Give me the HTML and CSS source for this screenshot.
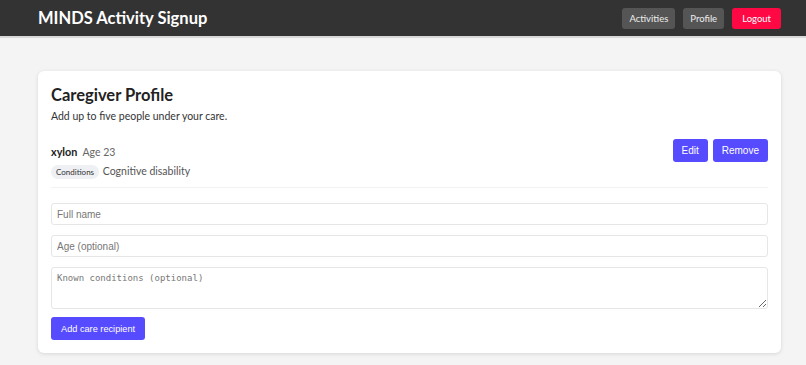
FILE: index.html
```html
<!DOCTYPE html>
<html lang="en">
<head>
  <meta charset="UTF-8">
  <meta name="viewport" content="width=device-width, initial-scale=1.0">
  <title>MINDS Activity Signup</title>
  <link rel="stylesheet" href="styles.css">
</head>
<body>
  <header class="topbar">
    <div class="brand">MINDS Activity Signup</div>
    <nav class="nav">
      <a href="#" class="nav-btn">Activities</a>
      <a href="#" class="nav-btn">Profile</a>
      <a href="#" class="nav-btn logout">Logout</a>
    </nav>
  </header>

  <main>
    <!-- Profil du soignant -->
    <section class="card">
      <h1>Caregiver Profile</h1>
      <p class="lead">Add up to five people under your care.</p>

      <div class="recipient">
        <div class="recipient-info">
          <div><span class="name">xylon</span> <span class="age">Age 23</span></div>
          <div class="cond"><span class="pill">Conditions</span> Cognitive disability</div>
        </div>
        <div class="recipient-actions">
          <button class="btn">Edit</button>
          <button class="btn">Remove</button>
        </div>
      </div>

      <form class="add-form" onsubmit="return false">
        <input type="text" placeholder="Full name">
        <input type="text" placeholder="Age (optional)">
        <textarea placeholder="Known conditions (optional)"></textarea>
        <div class="form-actions"><button class="btn add">Add care recipient</button></div>
      </form>
    </section>
  </main>
</body>
</html>
```

FILE: styles.css
```css
/* Style général */
body {
  font-family: Lato, "Open Sans", sans-serif;
  margin: 0;
  padding: 0;
  background-color: #f4f4f4;
  color: #222;
}

.topbar {
  background-color: #333;
  border-bottom: 2px solid #d8d8d8;
  height: 36px;
  display: flex;
  align-items: center;
  justify-content: space-between;
  padding: 0 25px 0 38px;
}

.brand {
  color: #fff;
  font-weight: 700;
  font-size: 16.5px;
}

.nav {
  display: flex;
  gap: 8px;
}

.nav-btn {
  background-color: #555;
  color: #eee;
  text-decoration: none;
  font-size: 9.5px;
  padding: 0 7px;
  height: 21px;
  line-height: 21px;
  border-radius: 3px;
}

.nav-btn.logout {
  background-color: #ff0844;
  color: #fff;
  padding: 0 10px;
}

main {
  padding: 33px 25px 20px 38px;
}

.card {
  background: #fff;
  border-radius: 6px;
  box-shadow: 0 1px 4px rgba(0, 0, 0, 0.12);
  padding: 14px 13px 13px 13px;
}

.card h1 {
  font-size: 16.5px;
  font-weight: 700;
  margin: 0;
  line-height: 21px;
}

.lead {
  font-size: 10.5px;
  color: #333;
  margin: 4px 0 0;
}

.recipient {
  display: flex;
  justify-content: space-between;
  align-items: flex-start;
  margin-top: 13px;
  padding-bottom: 8px;
  border-bottom: 1px solid #f2f2f2;
}

.recipient-info {
  padding-top: 5px;
}

.name {
  font-weight: 700;
  font-size: 10.8px;
}

.age {
  font-size: 10.5px;
  color: #666;
  margin-left: 1px;
}

.cond {
  margin-top: 6px;
  font-size: 10.5px;
  color: #555;
}

.pill {
  display: inline-block;
  background: #eef0f4;
  color: #333;
  font-size: 8px;
  padding: 2px 5px;
  border-radius: 8px;
  margin-right: 1px;
}

.recipient-actions {
  display: flex;
  gap: 5px;
  padding-top: 4px;
}

.btn {
  background-color: #574bff;
  color: #fff;
  border: none;
  border-radius: 3px;
  font-family: "Liberation Sans", Arial, sans-serif;
  font-size: 10px;
  height: 23px;
  padding: 0 9px;
  cursor: pointer;
}

.add-form {
  display: flex;
  flex-direction: column;
  gap: 10px;
  margin-top: 15px;
}

.add-form input,
.add-form textarea {
  border: 1px solid #e6e6e6;
  border-radius: 3px;
  padding: 0 5px;
  font-size: 10px;
  color: #333;
  box-sizing: border-box;
  width: 100%;
  margin: 0;
}

.add-form input {
  height: 22px;
  font-family: "Liberation Sans", Arial, sans-serif;
}

.add-form textarea {
  height: 42px;
  padding-top: 5px;
  font-family: "DejaVu Sans Mono", monospace;
  font-size: 9px;
  display: block;
}

.add-form ::placeholder {
  color: #777;
}

.form-actions {
  display: flex;
  margin-top: -2px;
}

.btn.add {
  font-size: 9.2px;
  padding: 0 10px;
}
```
